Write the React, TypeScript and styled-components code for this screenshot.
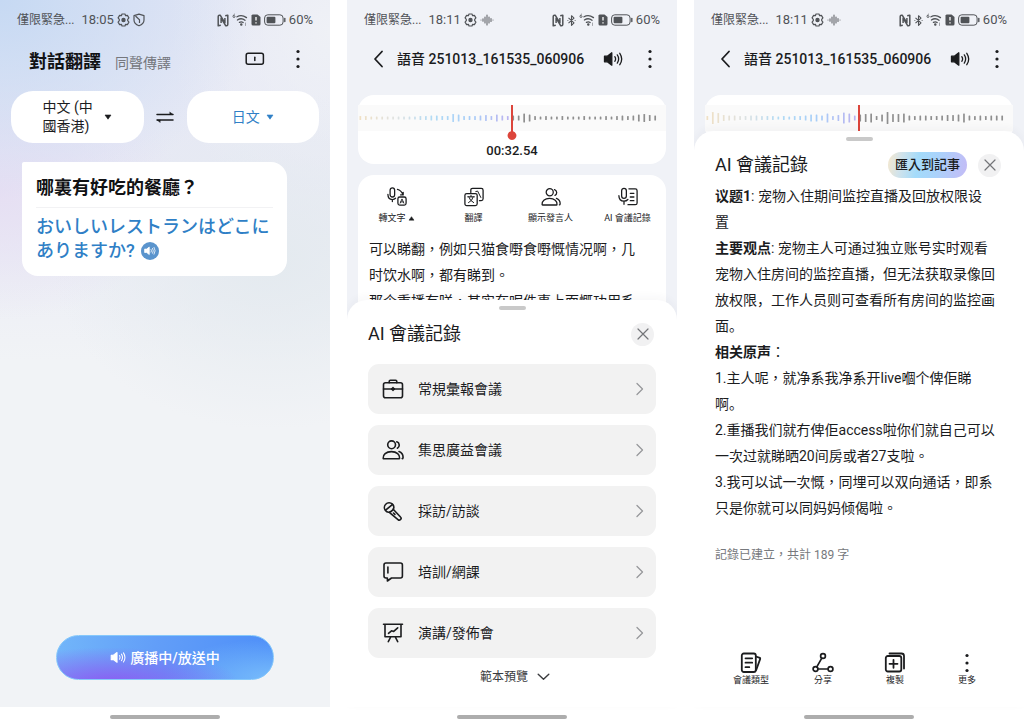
import React from "react";
import styled, { createGlobalStyle, css } from "styled-components";

const latin = "Roboto";
const tc = `${latin}, "Noto Sans CJK TC", sans-serif`;
const sc = `${latin}, "Noto Sans CJK SC", sans-serif`;
const jp = `${latin}, "Noto Sans CJK JP", sans-serif`;

const GlobalStyle = createGlobalStyle`
  *, *::before, *::after { box-sizing: border-box; }
  body { margin: 0; background: #fff; color: #1b1c1e; font-family: ${tc}; font-size: 14px; }
  button { margin: 0; padding: 0; border: 0; background: none; color: inherit; font: inherit; cursor: pointer; }
  h1, h2, p, ul { margin: 0; padding: 0; font-weight: 400; }
  ul { list-style: none; }
  svg { display: block; flex: none; }
`;

/* ---------- page and phone frame ---------- */

const Page = styled.main`
  display: grid;
  grid-template-columns: repeat(3, minmax(0, 1fr));
  gap: 17px;
  min-height: 100vh;
`;

const Phone = styled.section<{ $tinted?: boolean }>`
  display: flex;
  flex-direction: column;
  overflow: hidden;
  background: #f0f2f7;
  ${(p) =>
    p.$tinted &&
    css`
      background:
        radial-gradient(260px 200px at 0 0, #c6d9f3 0%, rgba(198, 217, 243, 0) 100%),
        radial-gradient(180px 130px at 0 190px, #e6dff3 0%, rgba(230, 223, 243, 0) 100%),
        radial-gradient(220px 170px at 82% 260px, #e4eaef 0%, rgba(228, 234, 239, 0) 100%),
        radial-gradient(160px 200px at 100% 30px, #eff1f6 0%, rgba(239, 241, 246, 0) 100%),
        linear-gradient(180deg, #e5e7f5 0, #e8eaf5 180px, #f1f3f6 360px);
    `}
`;

const HomeArea = styled.div`
  display: flex;
  justify-content: center;
  height: 20px;
  padding-top: 8px;
  background: #fff;
`;

const HomeBar = styled.div`
  width: 110px;
  height: 4px;
  border-radius: 2px;
  background: #adadad;
`;

const Home = () => (
  <HomeArea>
    <HomeBar />
  </HomeArea>
);

/* ---------- status bar ---------- */

const Status = styled.div`
  display: flex;
  align-items: center;
  justify-content: space-between;
  height: 40px;
  padding: 0 17px;
  color: #505357;
  line-height: 16px;
`;

const StatusGroup = styled.div<{ $gap: number }>`
  display: flex;
  align-items: center;
  gap: ${(p) => p.$gap}px;
`;

const Carrier = styled.span`
  font-size: 12px;
  margin-right: 4px;
`;

const StatusText = styled.span`
  font-size: 13px;
`;

const Gear = () => (
  <svg width="13" height="14" viewBox="0 0 13 14" fill="none" stroke="currentColor" strokeWidth="1.2">
    <path d="M5 1h3l.6 1.7 1.8-.3 1.5 2.5L10.700 6.300v1.400l1.200 1.400-1.500 2.500-1.800-.3L8 13H5l-.6-1.700-1.800.3L1.100 9.100l1.200-1.400V6.300L1.100 4.900l1.500-2.500 1.800.3z" strokeLinejoin="round" />
    <circle cx="6.500" cy="7" r="1.600" fill="currentColor" />
  </svg>
);

const Shield = () => (
  <svg width="12" height="14" viewBox="0 0 12 14" fill="none" stroke="currentColor" strokeWidth="1.200">
    <path d="M6 1.200l5 1.400V7c0 2.800-2 4.700-5 5.800C3 11.700 1 9.800 1 7V2.600z" strokeLinejoin="round" />
    <path d="M2.500 3l4 3.800V10" />
  </svg>
);

const VoiceWave = () => (
  <svg width="14" height="14" viewBox="0 0 14 14" stroke="currentColor" strokeWidth="1.200" strokeLinecap="round" opacity=".8">
    <path d="M1 7h0M3 5.800v2.400M5 4v6M7 2v10M9 4v6M11 5.500v3M13 7h0" />
  </svg>
);

const Nfc = () => (
  <svg width="12" height="13" viewBox="0 0 12 13" fill="none" stroke="currentColor" strokeWidth="1.500" strokeLinejoin="round">
    <path d="M3.800 11.200L1.200 11.800V2.400Q1.200 1.200 2.400 1.200H3.200L7.900 8.800V4" />
    <path d="M8.200 1.800L10.800 1.200v9.400Q10.800 11.800 9.600 11.800H8.800L4.100 4.200V9" />
  </svg>
);

const Bluetooth = () => (
  <svg width="9" height="13" viewBox="0 0 9 13" fill="none" stroke="currentColor" strokeWidth="1.100" strokeLinejoin="round">
    <path d="M1.500 3.800l5.500 5-2.500 2.500V1.700L7 4.200l-5.500 5" />
    <path d="M.5 6.500h0.800M7.700 6.500h0.800" />
  </svg>
);

const Wifi = () => (
  <svg width="16" height="14" viewBox="0 0 16 14" fill="none" stroke="currentColor" strokeWidth="1.300" strokeLinecap="round">
    <path d="M2.400 1.200Q1 2.200 1 3.500a1 1 0 1 0 1-1" strokeWidth=".9" />
    <path d="M5 3.800Q9.500 1 14.500 4.600M5.400 7Q9.400 4.400 13 7.300M7.400 9.400Q9.300 8.200 11.200 9.500" />
    <circle cx="9.300" cy="11.600" r=".6" fill="currentColor" />
    <path d="M13.500 10v2.500" strokeWidth=".8" opacity=".6" />
  </svg>
);

const SimAlert = () => (
  <svg width="10" height="12" viewBox="0 0 10 12">
    <path d="M1.500.5h5L9.500 3v7a1.500 1.500 0 0 1-1.500 1.500H2A1.500 1.500 0 0 1 .5 10V1.500z" fill="currentColor" />
    <path d="M5 3v3.600M5 8.200v1.200" stroke="#fff" strokeWidth="1.300" />
  </svg>
);

const Battery = () => (
  <svg width="22" height="12" viewBox="0 0 22 12" fill="none">
    <rect x=".6" y=".8" width="18.500" height="10.400" rx="3.200" stroke="currentColor" />
    <rect x="2.600" y="2.800" width="8.800" height="6.400" rx="1" fill="currentColor" />
    <path d="M20.800 4.500v3" stroke="currentColor" strokeWidth="1.400" strokeLinecap="round" />
  </svg>
);

const StatusBar = ({ time, recording }: { time: string; recording?: boolean }) => (
  <Status>
    <StatusGroup $gap={3}>
      <Carrier>僅限緊急...</Carrier>
      <StatusText>{time}</StatusText>
      <Gear />
      {recording ? <VoiceWave /> : <Shield />}
    </StatusGroup>
    <StatusGroup $gap={3}>
      <Nfc />
      {recording && <Bluetooth />}
      <Wifi />
      <SimAlert />
      <Battery />
      <StatusText>60%</StatusText>
    </StatusGroup>
  </Status>
);

/* ---------- shared icons ---------- */

const Dots = ({ size = 20 }: { size?: number }) => (
  <svg width="6" height={size} viewBox="0 0 6 20" fill="currentColor">
    <circle cx="3" cy="2.500" r="1.600" />
    <circle cx="3" cy="10" r="1.600" />
    <circle cx="3" cy="17.500" r="1.600" />
  </svg>
);

const Speaker = ({ width = 20 }: { width?: number }) => (
  <svg width={width} height={(width * 4) / 5} viewBox="0 0 20 16" fill="none" stroke="currentColor" strokeWidth="1.300" strokeLinecap="round">
    <path d="M1.500 5.200h2.800L8.800 1.800v12.400L4.300 10.800H1.500z" fill="currentColor" strokeLinejoin="round" />
    <path d="M11.800 5.700Q13.400 8 11.800 10.300M14.300 3.900Q17 8 14.300 12.100M16.800 2.300Q20.600 8 16.800 13.700" />
  </svg>
);

const Caret = ({ up }: { up?: boolean }) => (
  <svg width={up ? 7 : 8} height={up ? 5 : 6} viewBox="0 0 8 6" fill="currentColor">
    <path d={up ? "M4 .8L7 5H1z" : "M1 1h6L4 5.200z"} stroke="currentColor" strokeWidth=".6" strokeLinejoin="round" />
  </svg>
);

const IconButton = styled.button`
  display: grid;
  place-items: center;
  height: 24px;
`;

/* ---------- phone 1: translation ---------- */

const TranslateHeader = styled.header`
  display: flex;
  align-items: center;
  height: 44px;
  padding: 0 29px;
`;

const Tabs = styled.nav`
  display: flex;
  align-items: baseline;
  gap: 14px;
  flex: 1;
  line-height: 24px;
`;

const Tab = styled.button<{ $active?: boolean }>`
  font-size: ${(p) => (p.$active ? 18 : 14)}px;
  font-weight: ${(p) => (p.$active ? 700 : 400)};
  color: ${(p) => (p.$active ? "#111214" : "#75777d")};
`;

const HeaderActions = styled.div`
  display: flex;
  align-items: flex-start;
  gap: 30px;
  height: 30px;
`;

const Languages = styled.div`
  display: flex;
  align-items: center;
  padding: 7px 11px 0;
`;

const LanguagePill = styled.button<{ $blue?: boolean }>`
  display: flex;
  align-items: center;
  justify-content: center;
  flex: 1;
  gap: ${(p) => (p.$blue ? 6 : 11)}px;
  height: 52px;
  border-radius: 22px;
  background: #fff;
  color: ${(p) => (p.$blue ? "#2f7fc6" : "#1b1c1e")};
  line-height: 19px;
  text-align: left;
  white-space: pre-line;
`;

const SwapButton = styled(IconButton)`
  width: 43px;
`;

const Bubble = styled.article`
  margin: 19px 43px 0 22px;
  padding: 14px 14px 13px;
  border-radius: 2px 16px 16px 16px;
  background: #fff;
`;

const Source = styled.p`
  padding-bottom: 7px;
  border-bottom: 1px solid #f2f2f4;
  font-size: 18px;
  font-weight: 700;
  line-height: 24px;
  color: #111214;
`;

const Target = styled.p`
  padding-top: 7px;
  font-family: ${jp};
  font-size: 18px;
  font-weight: 500;
  line-height: 24px;
  color: #2f7fc6;
  white-space: nowrap;
`;

const TargetLine = styled.span`
  display: flex;
  align-items: center;
  height: 24px;
  gap: 6px;
`;

const PlayButton = styled.button`
  display: grid;
  place-items: center;
  width: 18px;
  height: 18px;
  border-radius: 50%;
  background: #5a94cd;
  color: #fff;
`;

const BroadcastButton = styled.button`
  display: flex;
  align-items: center;
  justify-content: center;
  gap: 4px;
  width: 66%;
  height: 45px;
  margin: auto auto 27px;
  border: 1px solid #86c8fb;
  border-radius: 23px;
  background:
    radial-gradient(130px 36px at 24% 110%, #8b5cf2 0%, rgba(139, 92, 242, 0) 100%),
    radial-gradient(110px 40px at 100% 100%, #78bdfb 0%, rgba(120, 189, 251, 0) 100%),
    linear-gradient(100deg, #72b6fa 0%, #629ef8 45%, #4d8ef8 100%);
  color: #fff;
  font-weight: 500;
  line-height: 20px;
`;

const TranslatePhone = () => (
  <Phone $tinted>
    <StatusBar time="18:05" />
    <TranslateHeader>
      <Tabs>
        <Tab $active>對話翻譯</Tab>
        <Tab>同聲傳譯</Tab>
      </Tabs>
      <HeaderActions>
        <IconButton aria-label="分屏">
          <svg width="20" height="14" viewBox="0 0 20 14" fill="none" stroke="currentColor" strokeWidth="1.500" strokeLinecap="round">
            <rect x="1.200" y="1.200" width="17.200" height="11" rx="2" />
            <path d="M9.800 5.200v3.200" />
          </svg>
        </IconButton>
        <IconButton aria-label="選單">
          <Dots />
        </IconButton>
      </HeaderActions>
    </TranslateHeader>
    <Languages>
      <LanguagePill>
        {"中文 (中\n國香港)"}
        <Caret />
      </LanguagePill>
      <SwapButton aria-label="交換語言">
        <svg width="18" height="12" viewBox="0 0 18 12" fill="none" stroke="currentColor" strokeWidth="1.500" strokeLinecap="round" strokeLinejoin="round">
          <path d="M1 3.500h16M17 9H1" />
          <path d="M14 1.200L17 3.500h-3zM4 11.300L1 9h3z" fill="currentColor" strokeWidth=".5" />
        </svg>
      </SwapButton>
      <LanguagePill $blue>
        日文
        <Caret />
      </LanguagePill>
    </Languages>
    <Bubble>
      <Source>哪裏有好吃的餐廳？</Source>
      <Target lang="ja">
        <TargetLine>おいしいレストランはどこに</TargetLine>
        <TargetLine>
          ありますか?
          <PlayButton aria-label="播放">
            <Speaker width={12} />
          </PlayButton>
        </TargetLine>
      </Target>
    </Bubble>
    <BroadcastButton>
      <Speaker width={16} />
      廣播中/放送中
    </BroadcastButton>
    <Home />
  </Phone>
);

/* ---------- phones 2 and 3: recording ---------- */

const RecordingHeader = styled.header`
  display: flex;
  align-items: center;
  height: 38px;
  padding: 0 24px 0 26px;
`;

const RecordingTitle = styled.h1`
  flex: 1;
  margin-left: 13px;
  font-size: 14px;
  font-weight: 500;
  line-height: 20px;
  white-space: nowrap;
`;

const RecordingActions = styled.div`
  display: flex;
  gap: 24px;
`;

const RecordHeader = () => (
  <RecordingHeader>
    <IconButton aria-label="返回">
      <svg width="11" height="18" viewBox="0 0 11 18" fill="none" stroke="currentColor" strokeWidth="1.800" strokeLinecap="round" strokeLinejoin="round">
        <path d="M9 1.500L2 9l7 7.500" />
      </svg>
    </IconButton>
    <RecordingTitle>語音 251013_161535_060906</RecordingTitle>
    <RecordingActions>
      <IconButton aria-label="揚聲器">
        <Speaker />
      </IconButton>
      <IconButton aria-label="選單">
        <Dots />
      </IconButton>
    </RecordingActions>
  </RecordingHeader>
);

const WaveCard = styled.div`
  margin: 17px 11px 0;
  padding: 10px 0 12px;
  border-radius: 16px;
  background: #fff;
`;

const TimedWaveCard = styled(WaveCard)`
  padding-bottom: 3px;
`;

const WaveBand = styled.div`
  height: 26px;
  background: #fafafa;

  svg {
    width: 100%;
    height: 36px;
  }
`;

const Elapsed = styled.p`
  padding-top: 10px;
  font-size: 13px;
  font-weight: 500;
  line-height: 20px;
  text-align: center;
`;

const fade = [
  [240, 224, 196],
  [222, 226, 226],
  [176, 218, 245],
  [168, 206, 248],
  [186, 180, 240],
];

const barColor = (i: number) => {
  if (i >= 28) return "#8f8f8f";
  const t = (i / 27) * (fade.length - 1);
  const k = Math.min(Math.floor(t), fade.length - 2);
  return `rgb(${fade[k].map((c, n) => Math.round(c + (fade[k + 1][n] - c) * (t - k))).join(",")})`;
};

const Waveform = ({ bars, pin }: { bars: number[]; pin?: boolean }) => (
  <WaveBand>
    <svg viewBox="0 0 308 36" aria-hidden="true">
      {bars.map((h, i) => (
        <rect key={i} x={1.5 + i * 5.46} y={13 - h / 2} width="1.700" height={h} rx=".6" fill={barColor(i)} />
      ))}
      <rect x="153" y="0" width="2" height="26" fill="#dc453b" />
      {pin && <path d="M153 25h2v1.200a4.400 4.400 0 1 1-2 0z" fill="#dc453b" />}
    </svg>
  </WaveBand>
);

const calmBars = [
  4, 4, 3, 3, 3, 3, 3, 3, 3, 3, 3, 4, 4, 5, 5, 4, 4, 8, 7, 4, 4, 4, 5, 6, 4, 7, 5, 4,
  5, 5, 9, 7, 4, 3, 4, 3, 3, 4, 3, 3, 3, 4, 3, 3, 3, 4, 3, 4, 5, 4, 5, 7, 8, 6, 5,
];
const livelyBars = [
  4, 12, 10, 6, 5, 5, 4, 4, 5, 5, 4, 4, 4, 3, 4, 3, 4, 4, 5, 7, 7, 5, 9, 4, 6, 11, 9, 5,
  7, 8, 9, 4, 7, 12, 8, 8, 9, 5, 4, 5, 5, 4, 4, 5, 6, 6, 7, 9, 5, 4, 5, 4, 5, 5, 5,
];

const Sheet = styled.section<{ $overlap: number }>`
  position: relative;
  display: flex;
  flex-direction: column;
  flex: 1;
  margin-top: -${(p) => p.$overlap}px;
  padding: 6px 21px 0;
  border-radius: 20px 20px 0 0;
  background: #fff;
  box-shadow: 0 -3px 8px rgba(40, 50, 70, 0.04);
`;

const Handle = styled.div`
  width: 27px;
  height: 4px;
  margin: 0 auto;
  border-radius: 2px;
  background: #c9c9c9;
`;

const SheetHeader = styled.header`
  display: flex;
  align-items: center;
  height: 26px;
  margin-top: 11px;
  gap: 11px;
`;

const SheetTitle = styled.h2`
  flex: 1;
  font-size: 18px;
  line-height: 26px;
`;

const CloseButton = styled.button`
  display: grid;
  place-items: center;
  width: 23px;
  height: 23px;
  margin-right: 2px;
  border-radius: 50%;
  background: #f1f1f2;
  color: #737478;
`;

const Close = () => (
  <CloseButton aria-label="關閉">
    <svg width="12" height="12" viewBox="0 0 12 12" stroke="currentColor" strokeWidth="1.200" strokeLinecap="round">
      <path d="M1 1l10 10M11 1L1 11" />
    </svg>
  </CloseButton>
);

/* ---------- phone 2: transcript and templates ---------- */

const TranscriptCard = styled.div`
  margin: 11px 11px 0;
  padding-top: 12px;
  border-radius: 16px 16px 0 0;
  background: #fff;
`;

const Tools = styled.div`
  display: grid;
  grid-template-columns: repeat(4, 1fr);
`;

const Action = styled.button<{ $gap?: number }>`
  display: flex;
  flex-direction: column;
  align-items: center;
  gap: ${(p) => p.$gap ?? 5}px;
  font-size: 9px;
  line-height: 12px;
  white-space: nowrap;
`;

const ActionLabel = styled.span`
  display: flex;
  align-items: center;
  gap: 2px;
`;

const Transcript = styled.p`
  height: 78px;
  margin-top: 12px;
  padding: 0 11px;
  overflow: hidden;
  line-height: 26px;
  white-space: pre;
`;

const TemplateList = styled.ul`
  display: grid;
  gap: 11px;
  margin-top: 17px;
`;

const TemplateButton = styled.button`
  display: flex;
  align-items: center;
  width: 100%;
  height: 50px;
  padding: 0 12px 0 14px;
  gap: 14px;
  border-radius: 11px;
  background: #f2f2f2;
  line-height: 20px;
`;

const TemplateName = styled.span`
  flex: 1;
  text-align: left;
`;

const PreviewButton = styled.button`
  display: flex;
  align-items: center;
  justify-content: center;
  gap: 9px;
  margin: 9px 0 auto;
  padding-left: 6px;
  font-size: 12px;
  line-height: 20px;
  color: #3a3b3e;
`;

const LineIcon = ({ children, size = 22, weight = 1.6 }: { children: React.ReactNode; size?: number; weight?: number }) => (
  <svg width={size} height={size} viewBox="0 0 22 22" fill="none" stroke="currentColor" strokeWidth={weight} strokeLinecap="round" strokeLinejoin="round">
    {children}
  </svg>
);

const peoplePaths = (
  <>
    <circle cx="9.600" cy="5.800" r="3.900" />
    <path d="M1.200 19.200c-.4-3.400 2.800-6.600 8.200-6.600s8.600 3.200 8.200 6.600q0 .6-.6.600H1.800q-.6 0-.6-.6z" />
    <path d="M14.800 2.800a3.500 3.500 0 0 1 .6 6.400M17 12.500c2.700 1.100 4.300 3.600 4 6.300q-.1.800-.8.800" />
  </>
);

const templates: { name: string; icon: React.ReactNode }[] = [
  {
    name: "常規彙報會議",
    icon: (
      <>
        <rect x="1.500" y="4.800" width="19" height="15" rx="2" />
        <path d="M7.200 4.800V3.400q0-1.200 1.200-1.200h5.200q1.200 0 1.200 1.200V4.800M1.500 11h19M11 9.600v2.800" />
        <path d="M10.200 11h1.600" strokeWidth="2.600" />
      </>
    ),
  },
  { name: "集思廣益會議", icon: peoplePaths },
  {
    name: "採訪/訪談",
    icon: (
      <>
        <path d="M3.500 10.500a4.600 4.600 0 0 1 .2-6.200 4.700 4.700 0 0 1 6.700-.2 4.700 4.700 0 0 1 .6 5.800Q8.500 12.400 6.500 12.200 4.600 12 3.500 10.500z" />
        <path d="M3.600 10.200l7-5.800M11.200 9.200l7.300 7.800a1.800 1.800 0 0 1-2.500 2.600L7.300 12.400M11.500 13l1.400 1.400" />
      </>
    ),
  },
  {
    name: "培訓/網課",
    icon: (
      <>
        <path d="M4 2h14.400q2 0 2 2V15q0 2-2 2H9.500L5.400 20v-3H4q-2 0-2-2V4q0-2 2-2z" />
        <path d="M5.900 6v6" />
      </>
    ),
  },
  {
    name: "演講/發佈會",
    icon: (
      <>
        <path d="M1.500 2.200h19M3 2.200v12.600h16V2.200M8.700 15l-2.400 4.700M13.300 15l2.400 4.700" />
        <path d="M6.500 11.300l3-2.500 2.200.6 4-3.600" />
      </>
    ),
  },
];

const RecordingPhone = () => (
  <Phone>
    <StatusBar time="18:11" recording />
    <RecordHeader />
    <TimedWaveCard>
      <Waveform bars={calmBars} pin />
      <Elapsed>00:32.54</Elapsed>
    </TimedWaveCard>
    <TranscriptCard>
      <Tools>
        <Action>
          <LineIcon size={20} weight={1.400}>
            <rect x="3.400" y="1" width="5" height="10" rx="2.500" />
            <path d="M1 8c0 3.600 2 5.800 4.900 5.800 1.500 0 2.700-.5 3.500-1.400M5.900 14v2M11.500 2.600Q15.500 3.500 17.600 8.500M17.800 5.800v2.900h-2.800" />
            <rect x="12" y="11" width="9" height="9" rx="2" />
            <path d="M14.500 17.700l2-4.600 2 4.600M15.200 16.400h2.600" strokeWidth="1" />
          </LineIcon>
          <ActionLabel>
            轉文字
            <Caret up />
          </ActionLabel>
        </Action>
        <Action>
          <LineIcon size={20} weight={1.400}>
            <path d="M7.500 6V3.500q0-2 2-2h9.500q2 0 2 2V13q0 2-2 2H17" />
            <rect x="1" y="7.200" width="13.500" height="13.300" rx="2" />
            <path d="M4 10.800h7.500M7.700 9.300v1.500M5 17.200q4.200-2 5.200-6.400M5.200 10.800q1.200 4.400 5.400 6.400M13 5l2-.5 3.500 7" strokeWidth="1.100" />
          </LineIcon>
          <ActionLabel>翻譯</ActionLabel>
        </Action>
        <Action>
          <LineIcon size={20} weight={1.400}>{peoplePaths}</LineIcon>
          <ActionLabel>顯示發言人</ActionLabel>
        </Action>
        <Action>
          <LineIcon size={20} weight={1.400}>
            <rect x="4" y="1.500" width="5.200" height="11" rx="2.600" />
            <path d="M1 9.600c0 3.800 2.200 5.900 5.600 5.900 1.900 0 3.300-.7 4.300-1.800M6.600 15.500v3.500" />
            <path d="M12 2h7q2 0 2 2v13.500q0 2-2 2h-8M13.500 7h4M13.500 11h4M13.500 15h4" />
          </LineIcon>
          <ActionLabel>AI 會議記錄</ActionLabel>
        </Action>
      </Tools>
      <Transcript>
        {"可以睇翻，例如只猫食嘢食嘢慨情况啊，几\n时饮水啊，都有睇到。\n那个重播有咩，其实在呢件事上面慨功用系"}
      </Transcript>
    </TranscriptCard>
    <Sheet $overlap={14}>
      <Handle />
      <SheetHeader>
        <SheetTitle>AI 會議記錄</SheetTitle>
        <Close />
      </SheetHeader>
      <TemplateList>
        {templates.map((t) => (
          <li key={t.name}>
            <TemplateButton>
              <LineIcon>{t.icon}</LineIcon>
              <TemplateName>{t.name}</TemplateName>
              <svg width="8" height="14" viewBox="0 0 8 14" fill="none" stroke="#97989b" strokeWidth="1.300" strokeLinecap="round" strokeLinejoin="round">
                <path d="M1 1.500L6.500 7 1 12.500" />
              </svg>
            </TemplateButton>
          </li>
        ))}
      </TemplateList>
      <PreviewButton>
        範本預覽
        <svg width="13" height="8" viewBox="0 0 13 8" fill="none" stroke="currentColor" strokeWidth="1.400" strokeLinecap="round" strokeLinejoin="round">
          <path d="M1.200 1.200l5.300 5 5.300-5" />
        </svg>
      </PreviewButton>
    </Sheet>
    <Home />
  </Phone>
);

/* ---------- phone 3: meeting minutes ---------- */

const ImportButton = styled.button`
  height: 26px;
  padding: 0 7px;
  border-radius: 13px;
  background: linear-gradient(100deg, #f6e8cd 0%, #d3e3ea 16%, #a4dbfa 38%, #a9d3fb 60%, #c4bbf6 100%);
  font-size: 13px;
  font-weight: 500;
  line-height: 26px;
`;

const Minutes = styled.div`
  margin-top: 5px;
  line-height: 26px;
  white-space: nowrap;
`;

const MinutesLine = styled.p<{ $simplified?: boolean }>`
  font-family: ${(p) => (p.$simplified ? sc : tc)};
`;

const WordCount = styled.p`
  margin-top: 24px;
  font-size: 12px;
  line-height: 20px;
  color: #77797d;
`;

const BottomActions = styled.footer`
  display: grid;
  grid-template-columns: repeat(4, 1fr);
  margin-top: auto;
  padding-bottom: 21px;
`;

type Line = { label?: string; text: string; traditional?: boolean };

const minutes: Line[] = [
  { label: "议题1", text: ": 宠物入住期间监控直播及回放权限设" },
  { text: "置" },
  { label: "主要观点", text: ": 宠物主人可通过独立账号实时观看" },
  { text: "宠物入住房间的监控直播，但无法获取录像回" },
  { text: "放权限，工作人员则可查看所有房间的监控画" },
  { text: "面。" },
  { label: "相关原声", text: "：", traditional: true },
  { text: "1.主人呢，就净系我净系开live嗰个俾佢睇", traditional: true },
  { text: "啊。" },
  { text: "2.重播我们就冇俾佢access啦你们就自己可以", traditional: true },
  { text: "一次过就睇晒20间房或者27支啦。", traditional: true },
  { text: "3.我可以试一次慨，同埋可以双向通话，即系", traditional: true },
  { text: "只是你就可以同妈妈倾偈啦。", traditional: true },
];

const MinutesPhone = () => (
  <Phone>
    <StatusBar time="18:11" recording />
    <RecordHeader />
    <WaveCard>
      <Waveform bars={livelyBars} />
    </WaveCard>
    <Sheet $overlap={12}>
      <Handle />
      <SheetHeader>
        <SheetTitle>AI 會議記錄</SheetTitle>
        <ImportButton>匯入到記事</ImportButton>
        <Close />
      </SheetHeader>
      <Minutes>
        {minutes.map((line) => (
          <MinutesLine key={line.text} $simplified={!line.traditional}>
            {line.label && <strong>{line.label}</strong>}
            {line.text}
          </MinutesLine>
        ))}
      </Minutes>
      <WordCount>記錄已建立，共計 189 字</WordCount>
      <BottomActions>
        <Action $gap={0}>
          <LineIcon weight={1.800}>
            <rect x="1.800" y="1.500" width="14" height="18.500" rx="2" />
            <path d="M5.500 6.300h6.700M5.500 10.700h6.700M5.500 15.200h3.800M16 4.500l3.800 1.400q.6.300.4 1L16.200 18" />
          </LineIcon>
          <ActionLabel>會議類型</ActionLabel>
        </Action>
        <Action $gap={0}>
          <LineIcon weight={1.700}>
            <circle cx="11" cy="4" r="2.400" />
            <circle cx="3.500" cy="17" r="2.400" />
            <circle cx="18.500" cy="17" r="2.400" />
            <path d="M9.800 6.200L4.800 14.900M5.900 17h10.200" />
          </LineIcon>
          <ActionLabel>分享</ActionLabel>
        </Action>
        <Action $gap={0}>
          <LineIcon weight={1.800}>
            <rect x="1.800" y="4" width="15.500" height="15.500" rx="2" />
            <path d="M5.500 1.500h12q2.500 0 2.500 2.500v12.500M9.500 7.800v8M5.500 11.800h8" />
          </LineIcon>
          <ActionLabel>複製</ActionLabel>
        </Action>
        <Action $gap={0}>
          <Dots size={22} />
          <ActionLabel>更多</ActionLabel>
        </Action>
      </BottomActions>
    </Sheet>
    <Home />
  </Phone>
);

export default function App() {
  return (
    <>
      <GlobalStyle />
      <Page>
        <TranslatePhone />
        <RecordingPhone />
        <MinutesPhone />
      </Page>
    </>
  );
}
